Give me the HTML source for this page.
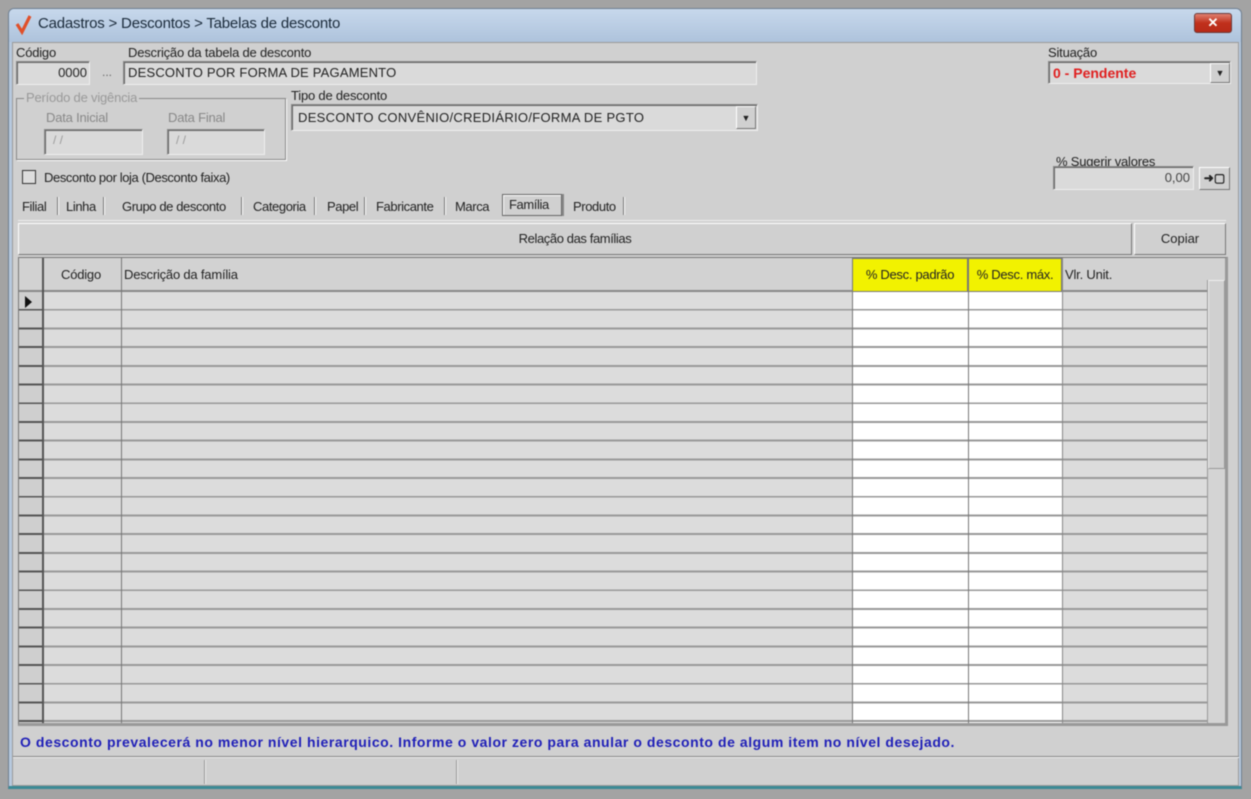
<!DOCTYPE html>
<html><head><meta charset="utf-8"><style>
*{box-sizing:border-box;margin:0;padding:0}
body{width:1251px;height:799px;background:#a3a3a3;position:relative;overflow:hidden;font-family:"Liberation Sans",sans-serif;font-size:12px;color:#222}
#w{position:absolute;left:0;top:0;width:1251px;height:799px;filter:blur(0.5px)}
.a{position:absolute}
.win{left:8px;top:8px;width:1234px;height:781px;background:#b7c9de;border:1px solid #6f7f90;border-radius:6px 6px 0 0;border-bottom:3px solid #3b8a95}
.title{left:9px;top:9px;width:1232px;height:33px;background:linear-gradient(#c7d8ec,#aec3dc);border-radius:5px 5px 0 0}
.body{left:12px;top:42px;width:1227px;height:744px;background:#d0d0d0;border:1px solid #9a9a9a}
.lbl{font-size:13px;letter-spacing:-0.2px;color:#222}
.inp{background:#dadada;border:1px solid #8a8a8a;border-right-color:#eee;border-bottom-color:#eee;box-shadow:inset 1px 1px 0 #666}
.tab{font-size:13px;letter-spacing:-0.4px;top:199px}
.sep{width:2px;height:18px;top:197px;background:#777;border-right:1px solid #fff}
.btn{background:#d0d0d0;border:1px solid #fff;border-right-color:#777;border-bottom-color:#777}
</style></head><body><div id="w">
<div class="a win"></div>
<div class="a title"></div>
<svg class="a" style="left:14px;top:13px" width="20" height="22"><path d="M3 11 L8 19 L16 3" stroke="#e0502a" stroke-width="3.2" fill="none"/></svg>
<div class="a" style="left:38px;top:15px;font-size:15px;color:#1a2a3a;letter-spacing:-0.2px">Cadastros &gt; Descontos &gt; Tabelas de desconto</div>
<div class="a" style="left:1194px;top:13px;width:38px;height:20px;border-radius:3px;background:linear-gradient(#e08070,#c0301c 50%,#b82a18);border:1px solid #6a3a3a;color:#fff;text-align:center;font-weight:bold;font-size:13px;line-height:18px">✕</div>
<div class="a body"></div>

<div class="a lbl" style="left:16px;top:45px">Código</div>
<div class="a inp" style="left:16px;top:61px;width:74px;height:24px;text-align:right;padding:3px 2px;font-size:13px">0000</div>
<div class="a" style="left:96px;top:65px;width:22px;height:20px;text-align:center;color:#666">...</div>
<div class="a lbl" style="left:128px;top:45px">Descrição da tabela de desconto</div>
<div class="a inp" style="left:123px;top:61px;width:634px;height:24px;padding:3px 4px;font-size:13px;letter-spacing:0.2px">DESCONTO POR FORMA DE PAGAMENTO</div>

<div class="a" style="left:16px;top:98px;width:270px;height:62px;border:1px solid #888;box-shadow:1px 1px 0 #fff"></div>
<div class="a lbl" style="left:24px;top:90px;background:#d0d0d0;color:#999;padding:0 2px">Período de vigência</div>
<div class="a lbl" style="left:46px;top:110px;color:#888">Data Inicial</div>
<div class="a inp" style="left:44px;top:129px;width:99px;height:26px;color:#999;padding:3px 8px">/ /</div>
<div class="a lbl" style="left:168px;top:110px;color:#888">Data Final</div>
<div class="a inp" style="left:167px;top:129px;width:98px;height:26px;color:#999;padding:3px 8px">/ /</div>

<div class="a lbl" style="left:291px;top:88px">Tipo de desconto</div>
<div class="a inp" style="left:291px;top:104px;width:467px;height:27px;padding:5px 6px;font-size:13px;letter-spacing:0.3px">DESCONTO CONVÊNIO/CREDIÁRIO/FORMA DE PGTO</div>
<div class="a btn" style="left:736px;top:106px;width:20px;height:23px;font-size:9px;text-align:center;line-height:22px">▼</div>

<div class="a lbl" style="left:1048px;top:45px">Situação</div>
<div class="a inp" style="left:1048px;top:61px;width:183px;height:23px;padding:3px 4px;font-size:14px;font-weight:bold;color:#e02020">0 - Pendente</div>
<div class="a btn" style="left:1210px;top:63px;width:20px;height:20px;font-size:9px;text-align:center;line-height:19px">▼</div>

<div class="a lbl" style="left:1056px;top:154px">% Sugerir valores</div>
<div class="a inp" style="left:1053px;top:166px;width:141px;height:24px;text-align:right;padding:3px 3px;font-size:13px;color:#444">0,00</div>
<div class="a btn" style="left:1199px;top:167px;width:31px;height:23px;text-align:center;font-size:12px;font-weight:bold;line-height:21px">➜▢</div>

<div class="a" style="left:22px;top:170px;width:14px;height:14px;border:1px solid #333;background:#ddd"></div>
<div class="a lbl" style="left:44px;top:170px;letter-spacing:-0.4px">Desconto por loja (Desconto faixa)</div>

<div class="a tab" style="left:22px">Filial</div><div class="a sep" style="left:57px"></div>
<div class="a tab" style="left:66px">Linha</div><div class="a sep" style="left:103px"></div>
<div class="a tab" style="left:122px">Grupo de desconto</div><div class="a sep" style="left:241px"></div>
<div class="a tab" style="left:253px">Categoria</div><div class="a sep" style="left:314px"></div>
<div class="a tab" style="left:327px">Papel</div><div class="a sep" style="left:364px"></div>
<div class="a tab" style="left:376px">Fabricante</div><div class="a sep" style="left:444px"></div>
<div class="a tab" style="left:455px">Marca</div>
<div class="a" style="left:502px;top:194px;width:60px;height:22px;border:1px solid #666;box-shadow:inset 1px 1px 0 #fff,2px 0 0 #888"></div>
<div class="a tab" style="left:509px;top:197px">Família</div>
<div class="a tab" style="left:573px">Produto</div><div class="a sep" style="left:623px"></div>

<div class="a" style="left:18px;top:220px;width:1208px;height:2px;border-top:1px solid #eee"></div>
<div class="a btn" style="left:18px;top:223px;width:1114px;height:32px;text-align:center;line-height:30px;font-size:13px;letter-spacing:-0.4px">Relação das famílias</div>
<div class="a btn" style="left:1134px;top:223px;width:92px;height:32px;text-align:center;line-height:30px;font-size:13px">Copiar</div>

<div class="a" style="left:18px;top:257px;width:1210px;height:469px;background:#d9d9d9;border:1px solid #777;border-right:3px solid #999;border-bottom:3px solid #999;overflow:hidden">
 <div class="a" style="left:0;top:34px;width:1206px;height:440px;background:repeating-linear-gradient(to bottom,#dcdcdc 0,#dcdcdc 16.8px,#999 16.8px,#999 18.7px)"></div>
 <div class="a" style="left:0;top:0;width:1206px;height:34px;background:#d2d2d2;border-bottom:2px solid #888"></div>
 <div class="a" style="left:0;top:34px;width:23px;height:440px;background:repeating-linear-gradient(to bottom,#cfcfcf 0,#cfcfcf 16.8px,#555 16.8px,#555 18.7px)"></div>
 <div class="a" style="left:23px;top:0;width:2px;height:470px;background:#555"></div>
 <div class="a" style="left:102px;top:0;width:1px;height:470px;background:#777"></div>
 <div class="a lbl" style="left:42px;top:9px">Código</div>
 <div class="a lbl" style="left:105px;top:9px">Descrição da família</div>
 <div class="a" style="left:833px;top:0;width:116px;height:34px;background:#f2f200;border:1px solid #777;text-align:center;line-height:32px;font-size:13px;letter-spacing:-0.3px">% Desc. padrão</div>
 <div class="a" style="left:949px;top:0;width:94px;height:34px;background:#f2f200;border:1px solid #777;text-align:center;line-height:32px;font-size:13px;letter-spacing:-0.3px">% Desc. máx.</div>
 <div class="a" style="left:833px;top:34px;width:210px;height:432px;background:repeating-linear-gradient(to bottom,#fff 0,#fff 16.8px,#999 16.8px,#999 18.7px)"></div>
 <div class="a" style="left:833px;top:34px;width:1px;height:432px;background:#777"></div>
 <div class="a" style="left:949px;top:34px;width:1px;height:432px;background:#777"></div>
 <div class="a" style="left:1043px;top:0;width:1px;height:470px;background:#888"></div>
 <div class="a lbl" style="left:1046px;top:9px">Vlr. Unit.</div>
 <div class="a" style="left:1188px;top:22px;width:18px;height:450px;background:#d4d4d4;border-left:1px solid #999"></div>
 <div class="a" style="left:1189px;top:22px;width:17px;height:189px;background:#d0d0d0;border:1px solid #999;border-top-color:#eee;border-left-color:#eee"></div>
 <div class="a" style="left:6px;top:38px;width:0;height:0;border-left:7px solid #111;border-top:6px solid transparent;border-bottom:6px solid transparent"></div>
</div>

<div class="a" style="left:20px;top:734px;font-size:14px;font-weight:bold;color:#2020b8;letter-spacing:0.55px;white-space:nowrap">O desconto prevalecerá no menor nível hierarquico. Informe o valor zero para anular o desconto de algum item no nível desejado.</div>
<div class="a" style="left:13px;top:756px;width:1226px;height:2px;background:#888;border-bottom:1px solid #eee"></div>
<div class="a" style="left:204px;top:760px;width:2px;height:24px;background:#999;border-right:1px solid #eee"></div>
<div class="a" style="left:456px;top:760px;width:2px;height:24px;background:#999;border-right:1px solid #eee"></div>
</div></body></html>
